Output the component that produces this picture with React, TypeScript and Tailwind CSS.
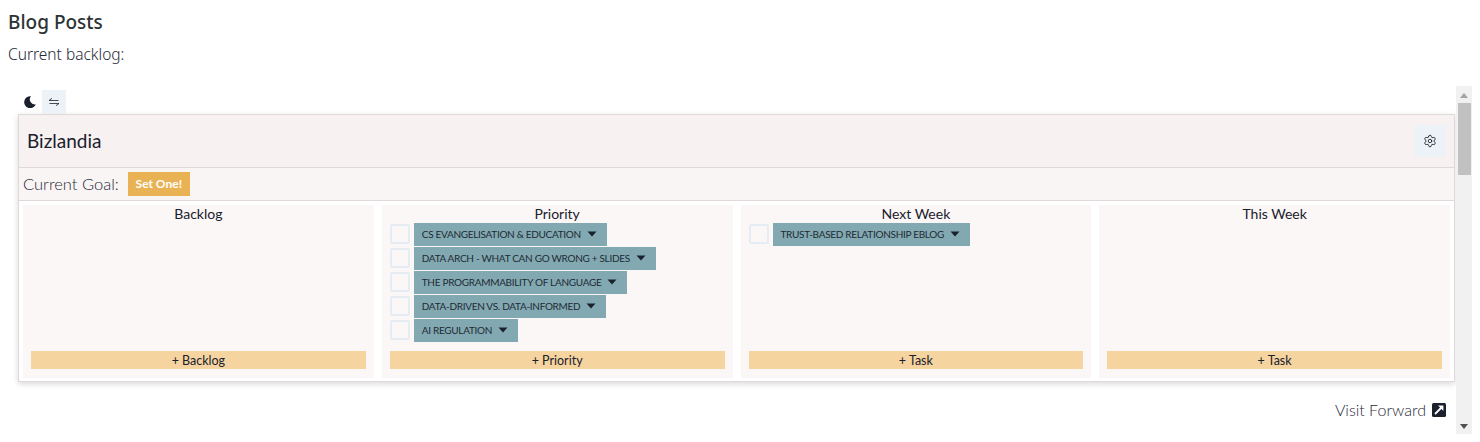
import { Settings } from 'lucide-react';

const FONT = "font-['Lato',sans-serif]";

function Tag({ label }: { label: string }) {
    return (
        <div className="flex items-center gap-1 h-6">
            <div className="w-5 h-5 rounded-[2px] border-2 border-[#e6ecf4] shrink-0" />
            <div className="flex items-center h-[23px] pl-2 pr-[10px] bg-[#82a9b2] text-[#1f2933] text-[10px] tracking-[-0.3px] uppercase whitespace-nowrap">
                <span>{label}</span>
                <svg className="ml-[6px]" width="10" height="6" viewBox="0 0 10 6">
                    <path d="M0.5 0.5h9L5 5.5z" fill="#1a202c" />
                </svg>
            </div>
        </div>
    );
}

function Column({ title, add, items = [] }: { title: string; add: string; items?: string[] }) {
    return (
        <div className="flex-1 flex flex-col bg-[#fbf7f6] px-2 pb-[9px]">
            <div className="h-[17px] leading-[17px] text-center text-sm text-[#1a202c]">{title}</div>
            <div className="flex-1 flex flex-col">
                {items.map((item) => (
                    <Tag key={item} label={item} />
                ))}
            </div>
            <div className="h-[18px] leading-[19px] bg-[#f5d4a0] text-center text-[12.5px] text-[#1a202c]">{add}</div>
        </div>
    );
}

export default function App() {
    return (
        <div className="w-[1480px] h-[442px] overflow-hidden bg-white px-2 font-['Noto_Sans',sans-serif]">
            <h2 className="pt-[9px] h-[35px] text-[19px] leading-[26px] font-medium text-[#2d3436]">Blog Posts</h2>
            <p className="pt-[9px] h-[51px] text-[15.5px] leading-[20px] font-light text-[#1f2937]">Current backlog:</p>

            {/* embedded board */}
            <div className={`flex w-[1464px] h-[348px] ${FONT}`}>
                <div className="flex-1 pl-[10px] pr-[1px] pt-1">
                    <div className="flex items-center h-6">
                        <svg className="ml-[6px] mr-[6px]" width="12" height="12" viewBox="0 0 12 12">
                            <path d="M7 0.2A6 6 0 1 0 11.8 8.3 5 5 0 0 1 7 0.2z" fill="#1a202c" />
                        </svg>
                        <div className="w-6 h-6 bg-[#edf2f7] flex items-center justify-center">
                            <svg width="10" height="8" viewBox="0 0 10 8" fill="none" stroke="#1a202c" strokeWidth="0.8">
                                <path d="M0 2.5h9.5M0 2.5L3 0.3M10 5.5H0.5M10 5.5L7 7.7" />
                            </svg>
                        </div>
                    </div>

                    <div className="h-[268px] border border-[#e0d9d9] shadow-[0_2px_6px_rgba(0,0,0,0.15)] bg-white flex flex-col">
                        <div className="h-[53px] shrink-0 flex items-center justify-between pl-2 pr-2 bg-[#f7f1f1] border-b border-[#e0d9d9]">
                            <span className="pt-[1px] text-[19px] text-[#1a202c]">Bizlandia</span>
                            <div className="w-8 h-8 bg-[#edf2f7] flex items-center justify-center">
                                <Settings size={14} color="#1a202c" strokeWidth={1.5} />
                            </div>
                        </div>
                        <div className="h-[33px] shrink-0 flex items-center gap-[9px] pl-1 bg-[#faf5f5] border-b border-[#e0d9d9]">
                            <span className="text-[16.5px] font-light text-[#1f2937]">Current Goal:</span>
                            <div className="w-[62px] h-6 bg-[#e9b355] text-white text-xs font-bold flex items-center justify-center">Set One!</div>
                        </div>
                        <div className="flex-1 flex gap-2 px-1 pt-1 pb-[3px]">
                            <Column title="Backlog" add="+ Backlog" />
                            <Column
                                title="Priority"
                                add="+ Priority"
                                items={[
                                    'CS Evangelisation & Education',
                                    'Data Arch - What Can Go Wrong + Slides',
                                    'The Programmability of Language',
                                    'Data-Driven vs. Data-Informed',
                                    'AI Regulation',
                                ]}
                            />
                            <Column title="Next Week" add="+ Task" items={['Trust-Based Relationship eBlog']} />
                            <Column title="This Week" add="+ Task" />
                        </div>
                    </div>

                    <div className="flex items-center justify-end gap-[6px] pr-[9px] pt-4 text-base font-light text-[#1f2937]">
                        <span>Visit Forward</span>
                        <svg width="14" height="14" viewBox="0 0 14 14">
                            <rect width="14" height="14" rx="1.5" fill="#1a202c" />
                            <path d="M3 11L10 4" fill="none" stroke="#fff" strokeWidth="1.8" />
                            <path d="M6 2.6h5.4V8z" fill="#fff" />
                        </svg>
                    </div>
                </div>

                {/* scrollbar */}
                <div className="w-4 shrink-0 bg-[#f1f1f1] flex flex-col items-center">
                    <svg className="mt-[7px]" width="8" height="5" viewBox="0 0 8 5">
                        <path d="M0 5L4 0l4 5z" fill="#a3a3a3" />
                    </svg>
                    <div className="mt-[5px] w-[13px] h-[72px] bg-[#c1c1c1]" />
                    <div className="flex-1" />
                    <svg className="mb-[5px]" width="8" height="5" viewBox="0 0 8 5">
                        <path d="M0 0L4 5l4-5z" fill="#505050" />
                    </svg>
                </div>
            </div>
        </div>
    );
}
